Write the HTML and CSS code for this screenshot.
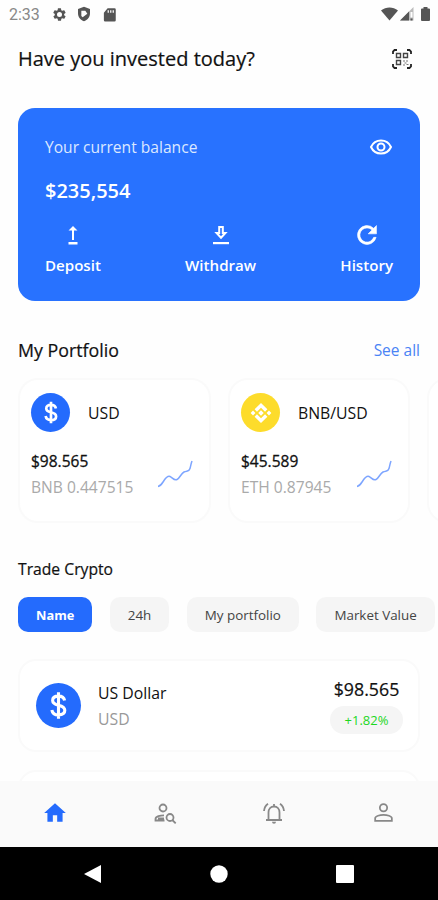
FILE: index.html
```html
<!DOCTYPE html>
<html lang="en">
<head>
    <meta charset="UTF-8">
    <meta name="viewport" content="width=device-width, initial-scale=1.0">
    <title>Crypto Wallet</title>
    <link rel="stylesheet" href="styles.css">
</head>
<body>
    <div class="status-bar">
        <span class="time">2:33</span>
        <svg class="gear" width="15" height="15" viewBox="0 0 24 24"><path fill-rule="evenodd" d="M19.4 13a7.500 7.500 0 0 0 0-2l2.100-1.600c.2-.2.300-.4.100-.7l-2-3.400c-.1-.2-.4-.3-.6-.2l-2.500 1a7 7 0 0 0-1.700-1l-.4-2.700a.5.5 0 0 0-.5-.4h-4c-.2 0-.5.200-.5.4l-.4 2.700a7 7 0 0 0-1.700 1l-2.500-1c-.2-.1-.5 0-.6.200l-2 3.400c-.1.300-.1.500.1.700L4.500 11a7.500 7.500 0 0 0 0 2l-2.100 1.600c-.2.200-.3.400-.1.700l2 3.400c.1.200.4.300.6.200l2.500-1a7 7 0 0 0 1.700 1l.4 2.700c0 .2.300.4.500.4h4c.2 0 .5-.2.500-.4l.4-2.700a7 7 0 0 0 1.700-1l2.500 1c.2.100.5 0 .6-.2l2-3.400c.2-.3.100-.5-.1-.7zM12 16a4 4 0 1 1 0-8 4 4 0 0 1 0 8z"/></svg>
        <svg class="shield" width="16" height="16" viewBox="0 0 24 24"><path fill-rule="evenodd" d="M12 1 3 4.500V11c0 6 3.800 10.400 9 12 5.200-1.600 9-6 9-12V4.500zM8 7h6l3 4.500-7 5.500-2-2z"/></svg>
        <svg class="sd" width="15" height="15" viewBox="0 0 24 24"><path fill-rule="evenodd" d="M20 2H9L3 9v12a2 2 0 0 0 2 2h15a2 2 0 0 0 2-2V4a2 2 0 0 0-2-2zM9 5h2v4H9zm4 0h2v4h-2zm4 0h2v4h-2z"/></svg>
        <div class="signals">
            <svg width="17" height="14" viewBox="0 0 17 14"><path d="M0 3.500C5-.4 12-.4 17 3.500L8.500 13.500z"/></svg>
            <svg width="14" height="14" viewBox="0 0 14 14"><path d="M0 13.500 13.500 0v13.500z" fill="#bbb"/><path d="M0 13.500 9 4.500v9zM10.500 11.500h2v2h-2z"/><path d="M10.500 5h2v5.500h-2z" fill="#fff"/></svg>
            <svg width="9" height="14" viewBox="0 0 9 14"><path d="M2.500 0h4v1.500H8a1 1 0 0 1 1 1V13a1 1 0 0 1-1 1H1a1 1 0 0 1-1-1V2.500a1 1 0 0 1 1-1h1.500z"/></svg>
        </div>
    </div>

    <div class="header">
        <h1>Have you invested today?</h1>
        <svg width="20" height="20" viewBox="0 0 20 20" fill="none" stroke="#222">
            <path d="M1 5V2.500L2.500 1H5M15 1h2.500L19 2.500V5M19 15v2.500L17.500 19H15M5 19H2.500L1 17.500V15" stroke-width="1.800"/>
            <path d="M4.500 4.500h4v4h-4zM11.500 4.500h4v4h-4zM4.500 11.500h4v4h-4z" stroke="#444" stroke-width="1.400"/>
            <path d="M11 12h2M14 12h2M12.500 14h2M11 16h2M14.500 15.500h2" stroke="#777"/>
        </svg>
    </div>

    <div class="balance-card">
        <div class="balance-top">
            <span>Your current balance</span>
            <svg width="24" height="24" viewBox="0 0 24 24" fill="none" stroke="#fff" stroke-width="2"><path d="M2 12c1.900-4.100 5.600-6.500 10-6.500s8.100 2.400 10 6.500c-1.900 4.100-5.600 6.500-10 6.500S3.900 16.100 2 12z"/><circle cx="12" cy="12" r="3.500"/></svg>
        </div>
        <div class="balance-amount">$235,554</div>
        <div class="actions">
            <div class="action">
                <svg viewBox="0 0 24 24" fill="#fff"><path d="M16.500 19v2.400h-9V19zM11 7.500H7.500L12 3l4.500 4.500H13V17h-2z"/></svg>
                <span>Deposit</span>
            </div>
            <div class="action">
                <svg viewBox="0 0 24 24"><path d="M10.200 4h3.600v6h2.600L12 14.700 7.600 10h2.600z" fill="none" stroke="#fff" stroke-width="2"/><path d="M4 19h16v2.200H4z" fill="#fff"/></svg>
                <span>Withdraw</span>
            </div>
            <div class="action history">
                <svg viewBox="1 1 22 22" fill="#fff"><path d="M17.650 6.350A8 8 0 1 0 19.730 14h-2.080A6 6 0 1 1 12 6c1.660 0 3.140.69 4.220 1.780L13 11h7V4z" stroke="#fff" stroke-width=".5"/></svg>
                <span>History</span>
            </div>
        </div>
    </div>

    <div class="section-title">
        <h2>My Portfolio</h2>
        <a href="#">See all</a>
    </div>

    <div class="portfolio">
        <div class="coin-card usd">
            <div class="coin-head">
                <div class="coin-icon"><svg width="22" height="25" viewBox="0 0 24 28" fill="none" stroke="#fff" stroke-width="3"><path d="M17.500 9.500C17 6.500 15 5.500 12 5.500c-3.300 0-5.300 1.500-5.300 4s2 3.500 5.300 4.300 5.700 1.900 5.700 4.600S15.500 22.500 12 22.500c-3.500 0-5.500-1.300-6-4.500M12 2v24"/></svg></div>
                <span>USD</span>
            </div>
            <div class="coin-body">
                <div>
                    <div class="coin-price">$98.565</div>
                    <div class="coin-amount">BNB 0.447515</div>
                </div>
                <svg class="chart" width="36" height="28" viewBox="0 0 36 28"><path d="M1 26.500c3-.5 4-3 6-6s3.500-5 6-4 4 4.500 7 3 4-6 7-7.500 5 0 6-3.500 1-5 2-7.500"/></svg>
            </div>
        </div>
        <div class="coin-card bnb">
            <div class="coin-head">
                <div class="coin-icon"><svg width="22" height="22" viewBox="0 0 24 24" fill="#fff"><path d="M12 1 5 8l2.600 2.600L12 6.200l4.400 4.400L19 8zM5 16l7 7 7-7-2.600-2.600-4.400 4.400-4.400-4.400zM3.300 9.400.7 12l2.600 2.600L5.900 12zM20.700 9.400 18.100 12l2.600 2.600 2.600-2.600zM12 9l-3 3 3 3 3-3z"/></svg></div>
                <span>BNB/USD</span>
            </div>
            <div class="coin-body">
                <div>
                    <div class="coin-price">$45.589</div>
                    <div class="coin-amount">ETH 0.87945</div>
                </div>
                <svg class="chart" width="36" height="28" viewBox="0 0 36 28"><path d="M1 26.500c3-.5 4-3 6-6s3.500-5 6-4 4 4.500 7 3 4-6 7-7.500 5 0 6-3.500 1-5 2-7.500"/></svg>
            </div>
        </div>
        <div class="coin-card next"></div>
    </div>

    <h3>Trade Crypto</h3>

    <div class="chips">
        <button class="chip active">Name</button>
        <button class="chip">24h</button>
        <button class="chip">My portfolio</button>
        <button class="chip">Market Value</button>
    </div>

    <div class="trade-list">
        <div class="trade-item">
            <div class="coin-icon"><svg width="27" height="31" viewBox="0 0 24 28" fill="none" stroke="#fff" stroke-width="2.800"><path d="M17.500 9.500C17 6.500 15 5.500 12 5.500c-3.300 0-5.300 1.500-5.300 4s2 3.500 5.300 4.300 5.700 1.900 5.700 4.600S15.500 22.500 12 22.500c-3.500 0-5.500-1.300-6-4.500M12 2v24"/></svg></div>
            <div class="trade-name">
                <div>US Dollar</div>
                <small>USD</small>
            </div>
            <div class="trade-value">
                <div>$98.565</div>
                <span class="change">+1.82%</span>
            </div>
        </div>
        <div class="trade-item"></div>
    </div>

    <div class="tab-bar">
        <svg width="26" height="26" viewBox="0 0 24 24" fill="#246bfd"><path d="M10 20v-6h4v6h5v-8h3L12 3 2 12h3v8z"/></svg>
        <svg width="24" height="24" viewBox="0 0 24 24" fill="none" stroke="#888" stroke-width="1.800"><circle cx="10" cy="7" r="3.500"/><path d="M11 14.300c-3.500 0-8.500 1.200-8.500 3.700v1.500h9M5 17.500h6"/><circle cx="17" cy="16.500" r="3.500"/><path d="m19.300 19 3.400 3.400"/></svg>
        <svg width="24" height="24" viewBox="0 0 24 24" fill="none" stroke="#888" stroke-width="1.800"><path d="M4 19h16M6.500 19v-7.500c0-3.500 2.300-6 5.500-6s5.500 2.500 5.500 6V19M12 5.500V3M2 10c.3-3 1.600-5.500 4-7.200M22 10c-.3-3-1.600-5.500-4-7.200"/><path d="M10 20.800h4a2 2 0 0 1-4 0z" fill="#888" stroke="none"/></svg>
        <svg width="25" height="25" viewBox="0 0 24 24" fill="none" stroke="#888" stroke-width="1.700"><circle cx="12" cy="7.500" r="3.500"/><path d="M4 20v-2.500c0-2 4.500-3.200 8-3.200s8 1.200 8 3.200V20z"/></svg>
    </div>

    <div class="system-nav">
        <svg width="17" height="18" viewBox="0 0 17 18"><path d="M0 9 17 0v18z"/></svg>
        <svg width="18" height="18" viewBox="0 0 18 18"><circle cx="9" cy="9" r="8.700"/></svg>
        <svg width="18" height="18" viewBox="0 0 18 18"><rect width="18" height="18" rx="1"/></svg>
    </div>
</body>
</html>
```
FILE: styles.css
```css
* {
    box-sizing: border-box;
}
body {
    font-family: "Open Sans", "Noto Sans", sans-serif;
    background-color: #fefefe;
    color: #111;
    margin: 0;
    width: 438px;
    height: 900px;
    display: flex;
    flex-direction: column;
    overflow: hidden;
    white-space: nowrap;
}
svg {
    display: block;
    flex-shrink: 0;
}
h1, h2, h3 {
    margin: 0;
    font-weight: 400;
    -webkit-text-stroke: 0.2px #111;
}
.status-bar {
    height: 28px;
    padding: 0 8px 0 9px;
    display: flex;
    align-items: center;
    fill: #555;
}
.time {
    font-family: Roboto, sans-serif;
    font-size: 16px;
    color: #888;
    width: 43px;
}
.shield {
    margin-left: 9px;
}
.sd {
    margin-left: 10px;
}
.signals {
    display: flex;
    gap: 2px;
    margin-left: auto;
}
.signals svg:last-child {
    margin-left: 5px;
}
.header {
    height: 61px;
    padding: 0 26px 0 18px;
    display: flex;
    align-items: center;
    justify-content: space-between;
}
.header h1 {
    font-size: 20px;
}
.balance-card {
    height: 193px;
    margin: 19px 18px 0;
    padding: 27px 27px 0;
    border-radius: 17px;
    background-color: #2872ff;
    color: white;
}
.balance-top {
    height: 24px;
    display: flex;
    align-items: center;
    justify-content: space-between;
    font-size: 15.6px;
    color: #dce8ff;
}
.balance-amount {
    margin-top: 18px;
    font-size: 20px;
    line-height: 28px;
    font-weight: 600;
}
.actions {
    display: flex;
    justify-content: space-between;
    margin-top: 16px;
}
.action {
    display: flex;
    flex-direction: column;
    align-items: center;
    font-size: 15.1px;
    line-height: 22px;
    font-weight: 600;
}
.action svg {
    width: 24px;
    height: 28px;
    margin-bottom: 5px;
}
.action.history svg {
    width: 26px;
}
.section-title {
    height: 48px;
    margin-top: 25px;
    padding: 0 18px;
    display: flex;
    align-items: center;
    justify-content: space-between;
}
.section-title h2 {
    font-size: 17.8px;
}
.section-title a {
    font-size: 15.5px;
    color: #4a83f5;
    text-decoration: none;
}
.portfolio {
    display: flex;
    gap: 17px;
    margin-top: 4px;
    padding-left: 18px;
    overflow: hidden;
}
.coin-card {
    height: 145px;
    flex-shrink: 0;
    padding: 13px 12px 13px 11px;
    border: 2px solid #fafafa;
    border-radius: 20px;
    background-color: white;
}
.coin-card.usd {
    width: 193px;
}
.coin-card.bnb,
.coin-card.next {
    width: 182px;
}
.coin-head {
    display: flex;
    align-items: center;
    gap: 18px;
    font-size: 15.8px;
}
.coin-icon {
    width: 39px;
    height: 39px;
    flex-shrink: 0;
    border-radius: 50%;
    background-color: #246bfd;
    display: flex;
    align-items: center;
    justify-content: center;
}
.bnb .coin-icon {
    background-color: #fddc2b;
}
.coin-body {
    display: flex;
    justify-content: space-between;
    margin-top: 17px;
    padding-right: 4px;
}
.coin-price {
    font-size: 15.5px;
    line-height: 25px;
    -webkit-text-stroke: 0.3px #111;
}
.coin-amount {
    font-size: 15.6px;
    line-height: 26px;
    color: #aaa;
}
.chart {
    margin-top: 11px;
    fill: none;
    stroke: #7da5ff;
    stroke-width: 1.5;
}
h3 {
    margin: 34px 0 0 18px;
    font-size: 15.7px;
    line-height: 24px;
}
.chips {
    display: flex;
    gap: 17.5px;
    margin-top: 16px;
    padding-left: 18px;
    overflow: hidden;
}
.chip {
    height: 35px;
    flex-shrink: 0;
    padding: 0 18px;
    border: none;
    border-radius: 10px;
    background-color: #f5f5f5;
    color: #444;
    font-family: inherit;
    font-size: 13.4px;
}
.chip.active {
    background-color: #246bfd;
    color: white;
    font-size: 12.8px;
    font-weight: 700;
}
.trade-list {
    height: 122px;
    margin-top: 27px;
    padding: 0 18px;
    overflow: hidden;
}
.trade-item {
    height: 93px;
    margin-bottom: 18px;
    padding: 0 15px 0 16px;
    border: 2px solid #fafafa;
    border-radius: 18px;
    background-color: white;
    display: flex;
    align-items: center;
}
.trade-item .coin-icon {
    width: 45px;
    height: 45px;
}
.trade-name {
    margin-left: 17px;
    font-size: 15.8px;
    line-height: 26px;
}
.trade-name small {
    display: block;
    font-size: 15.8px;
    color: #999;
}
.trade-value {
    margin-left: auto;
    text-align: center;
    font-size: 17.8px;
    line-height: 28px;
}
.trade-value div {
    margin-top: -2px;
    -webkit-text-stroke: 0.2px #111;
}
.change {
    display: block;
    width: 73px;
    margin-top: 3px;
    border-radius: 14px;
    background-color: #f5f5f5;
    color: #1ed71e;
    font-size: 13px;
}
.tab-bar {
    height: 66px;
    padding: 0 42px 3px;
    background-color: #fafafa;
    display: flex;
    align-items: center;
    justify-content: space-between;
}
.system-nav {
    height: 53px;
    padding: 0 84px;
    background-color: black;
    fill: white;
    display: flex;
    align-items: center;
    justify-content: space-between;
}
```
